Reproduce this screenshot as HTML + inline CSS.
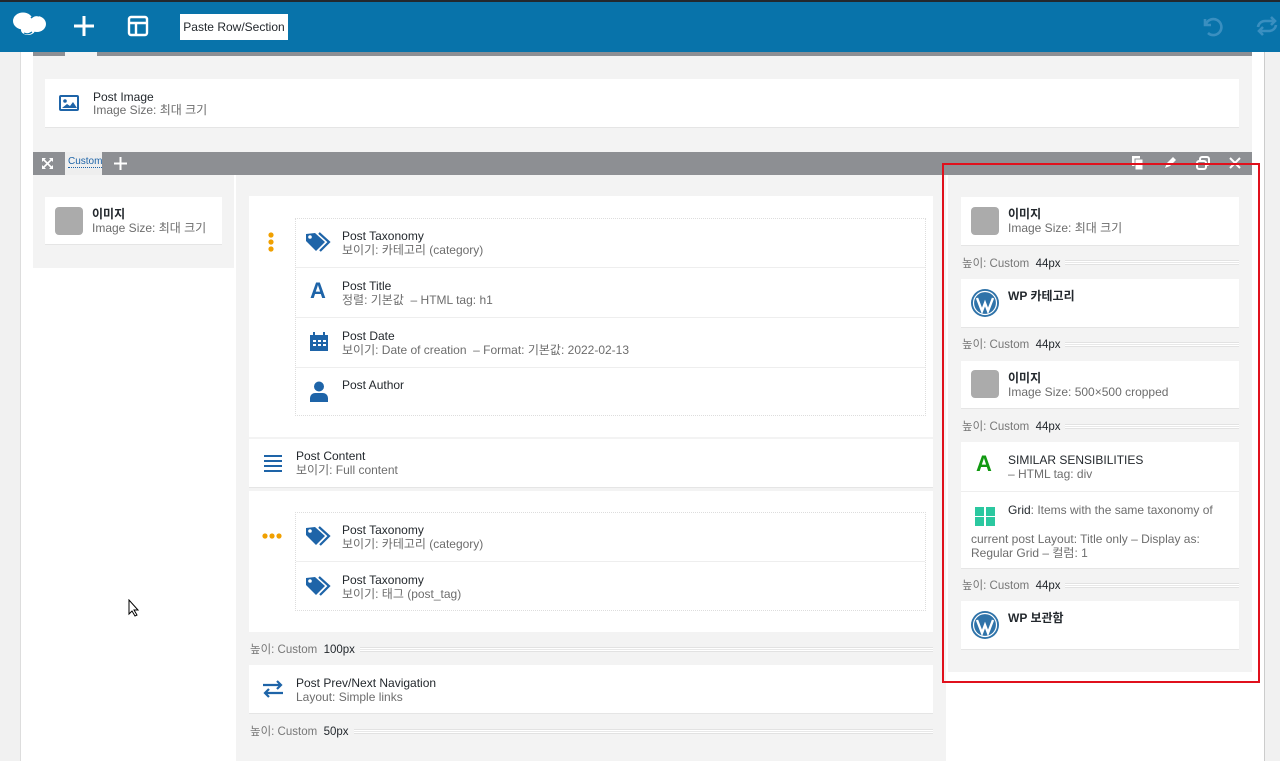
<!DOCTYPE html>
<html><head><meta charset="utf-8"><style>
*{box-sizing:border-box;margin:0;padding:0}
body{width:1280px;height:761px;overflow:hidden;position:relative;background:#f1f1f1;font-family:"Liberation Sans","Noto Sans CJK KR",sans-serif;font-size:12px;color:#23282d}
.a{position:absolute}
.card{position:absolute;background:#fff;border-bottom:1px solid #e5e5e5}
.t{position:absolute;font-size:12px;color:#23282d;line-height:14px;white-space:nowrap}
.s{color:#6d6d6d}
.sp{position:absolute;font-size:11.5px;color:#777;white-space:nowrap;line-height:14px}
.sp b{font-weight:normal;color:#23282d}
.ln{position:absolute;height:5px;border-top:1px solid #e2e2e2;border-bottom:1px solid #e2e2e2;background:repeating-linear-gradient(#fff 0 1px,#e8e8e8 1px 2px)}
.thumb{position:absolute;width:28px;height:28px;border-radius:4px;background:#ababab}
</style></head><body>
<div class="a" style="left:0;top:0;width:1280px;height:52px;background:#0873aa;border-top:2px solid #23282d"></div>
<svg class="a" style="left:12px;top:11px" width="36" height="26" viewBox="0 0 36 26"><ellipse cx="11" cy="10" rx="10" ry="8.5" fill="#fff"/><ellipse cx="25" cy="13" rx="9" ry="8" fill="#fff"/><ellipse cx="16" cy="19" rx="7" ry="5" fill="#fff"/><path d="M19 7 q4 -4 8 -2" stroke="#0873aa" stroke-width="1.5" fill="none"/><path d="M12 22 q4 2 8 -1" stroke="#0873aa" stroke-width="1.2" fill="none"/></svg>
<svg class="a" style="left:73px;top:15px" width="22" height="22"><path d="M11 1v20M1 11h20" stroke="#fff" stroke-width="3"/></svg>
<svg class="a" style="left:127px;top:15px" width="22" height="22"><rect x="2" y="2" width="18" height="18" rx="2" fill="none" stroke="#fff" stroke-width="2.4"/><path d="M2 8h18M9 8v12" stroke="#fff" stroke-width="2.4"/></svg>
<div class="a" style="left:180px;top:14px;width:108px;height:26px;background:#fff;font-size:12px;line-height:26px;text-align:center;color:#23282d">Paste Row/Section</div>
<svg class="a" style="left:1199px;top:15px" width="24" height="22"><path d="M6 4v6h6" stroke="#3a8fc0" stroke-width="2.6" fill="none"/><path d="M7 9a8 8 0 1 1 2 9" stroke="#3a8fc0" stroke-width="2.6" fill="none"/></svg>
<svg class="a" style="left:1254px;top:15px" width="26" height="22"><path d="M4 12a7 7 0 0 1 7-6h10M17 2l4 4-4 4M22 10a7 7 0 0 1-7 6H5M9 20l-4-4 4-4" stroke="#3a8fc0" stroke-width="2.6" fill="none"/></svg>

<div class="a" style="left:20px;top:52px;width:1245px;height:709px;background:#fff;border-left:1px solid #ddd;border-right:1px solid #ccc"></div>
<div class="a" style="left:33px;top:52px;width:1219px;height:4px;background:#8c8f94"></div>
<div class="a" style="left:65px;top:52px;width:32px;height:4px;background:#f3f3f3"></div>
<div class="a" style="left:33px;top:56px;width:1219px;height:96px;background:#f3f3f3"></div>
<div class="card" style="left:45px;top:79px;width:1194px;height:49px"></div>
<svg class="a" style="left:59px;top:95px" width="20" height="16"><rect width="20" height="16" rx="2" fill="#1e64a8"/><rect x="2" y="2" width="16" height="12" fill="#fff"/><circle cx="6" cy="6" r="1.8" fill="#1e64a8"/><path d="M3 13l5-4 3 2 3-4 4 6z" fill="#1e64a8"/></svg>
<div class="t" style="left:93px;top:90px">Post Image</div>
<div class="t s" style="left:93px;top:103px">Image Size: 최대 크기</div>

<div class="a" style="left:33px;top:152px;width:1219px;height:23px;background:#8d8f93"></div>
<svg class="a" style="left:41px;top:157px" width="13" height="13"><path d="M1 1l4 0-4 4zM12 1l0 4-4-4zM1 12l0-4 4 4zM12 12l-4 0 4-4z" fill="#fff"/><path d="M2 2l9 9M11 2l-9 9" stroke="#fff" stroke-width="1.6"/></svg>
<div class="a" style="left:65px;top:152px;width:37px;height:23px;background:#eee;font-size:10px;line-height:20px;color:#1e64a8;padding-left:3px"><span style="border-bottom:1px dotted #1e64a8">Custom</span></div>
<svg class="a" style="left:113px;top:156px" width="15" height="15"><path d="M7.5 1v13M1 7.5h13" stroke="#fff" stroke-width="2"/></svg>
<div class="a" style="left:1103px;top:163px;width:2px;height:2px;background:#fff"></div>
<svg class="a" style="left:1131px;top:156px" width="13" height="14"><rect x="1" y="0" width="8" height="10" fill="#fff"/><rect x="4" y="3" width="8" height="11" fill="#fff" stroke="#8d8f93"/></svg>
<svg class="a" style="left:1163px;top:156px" width="13" height="14"><path d="M2 12l2-5 6-6 3 3-6 6z" fill="#fff"/></svg>
<svg class="a" style="left:1196px;top:156px" width="14" height="14"><rect x="4" y="1" width="9" height="8" rx="2" fill="none" stroke="#fff" stroke-width="2"/><rect x="1" y="5" width="9" height="8" rx="2" fill="#8d8f93" stroke="#fff" stroke-width="2"/></svg>
<svg class="a" style="left:1229px;top:157px" width="12" height="12"><path d="M1 1l10 10M11 1L1 11" stroke="#fff" stroke-width="2"/></svg>

<div class="a" style="left:33px;top:175px;width:201px;height:93px;background:#f3f3f3"></div>
<div class="card" style="left:45px;top:197px;width:177px;height:48px"></div>
<div class="thumb" style="left:55px;top:207px"></div>
<div class="t" style="left:92px;top:207px;font-weight:bold">이미지</div>
<div class="t s" style="left:92px;top:221px">Image Size: 최대 크기</div>

<div class="a" style="left:236px;top:175px;width:710px;height:586px;background:#f3f3f3"></div>
<div class="a" style="left:249px;top:196px;width:684px;height:241px;background:#fff"></div>
<div class="a" style="left:295px;top:218px;width:631px;height:198px;border:1px dotted #ddd"></div>
<div class="a" style="left:296px;top:267px;width:629px;height:1px;background:#eee"></div>
<div class="a" style="left:296px;top:317px;width:629px;height:1px;background:#eee"></div>
<div class="a" style="left:296px;top:367px;width:629px;height:1px;background:#eee"></div>
<svg class="a" style="left:267px;top:232px" width="8" height="20"><circle cx="4" cy="3" r="2.6" fill="#f0a000"/><circle cx="4" cy="10" r="2.6" fill="#f0a000"/><circle cx="4" cy="17" r="2.6" fill="#f0a000"/></svg>
<svg class="a" style="left:305px;top:232px" width="26" height="20"><path d="M1 2v7l10 10 9-9L10 1z" fill="#1e64a8"/><circle cx="5" cy="5" r="1.8" fill="#fff"/><path d="M14 1l10 9-9 9" stroke="#1e64a8" stroke-width="2.2" fill="none"/></svg>
<div class="t" style="left:342px;top:229px">Post Taxonomy</div>
<div class="t s" style="left:342px;top:243px">보이기: 카테고리 (category)</div>
<div class="a" style="left:310px;top:279px;font:bold 22px 'Liberation Sans',sans-serif;color:#1e64a8;line-height:24px">A</div>
<div class="t" style="left:342px;top:279px">Post Title</div>
<div class="t s" style="left:342px;top:293px">정렬: 기본값 &nbsp;– HTML tag: h1</div>
<svg class="a" style="left:310px;top:332px" width="18" height="19"><rect x="0" y="3" width="18" height="16" fill="#1e64a8"/><rect x="3" y="0" width="2" height="4" fill="#1e64a8"/><rect x="13" y="0" width="2" height="4" fill="#1e64a8"/><g fill="#fff"><rect x="3" y="8" width="3" height="2"/><rect x="8" y="8" width="3" height="2"/><rect x="13" y="8" width="3" height="2"/><rect x="3" y="12" width="3" height="2"/><rect x="8" y="12" width="3" height="2"/><rect x="13" y="12" width="3" height="2"/></g></svg>
<div class="t" style="left:342px;top:329px">Post Date</div>
<div class="t s" style="left:342px;top:343px">보이기: Date of creation &nbsp;– Format: 기본값: 2022-02-13</div>
<svg class="a" style="left:310px;top:381px" width="18" height="21"><circle cx="9" cy="5.5" r="5" fill="#1e64a8"/><path d="M0 21v-4a5 5 0 0 1 5-5h8a5 5 0 0 1 5 5v4z" fill="#1e64a8"/></svg>
<div class="t" style="left:342px;top:378px">Post Author</div>

<div class="card" style="left:249px;top:439px;width:684px;height:49px"></div>
<svg class="a" style="left:264px;top:454px" width="18" height="18"><path d="M0 2h18M0 7h18M0 12h18M0 17h18" stroke="#1e64a8" stroke-width="2"/></svg>
<div class="t" style="left:296px;top:449px">Post Content</div>
<div class="t s" style="left:296px;top:463px">보이기: Full content</div>

<div class="a" style="left:249px;top:491px;width:684px;height:141px;background:#fff"></div>
<div class="a" style="left:295px;top:512px;width:631px;height:99px;border:1px dotted #ddd"></div>
<div class="a" style="left:296px;top:561px;width:629px;height:1px;background:#eee"></div>
<svg class="a" style="left:262px;top:532px" width="20" height="8"><circle cx="3" cy="4" r="2.6" fill="#f0a000"/><circle cx="10" cy="4" r="2.6" fill="#f0a000"/><circle cx="17" cy="4" r="2.6" fill="#f0a000"/></svg>
<svg class="a" style="left:305px;top:526px" width="26" height="20"><path d="M1 2v7l10 10 9-9L10 1z" fill="#1e64a8"/><circle cx="5" cy="5" r="1.8" fill="#fff"/><path d="M14 1l10 9-9 9" stroke="#1e64a8" stroke-width="2.2" fill="none"/></svg>
<div class="t" style="left:342px;top:523px">Post Taxonomy</div>
<div class="t s" style="left:342px;top:537px">보이기: 카테고리 (category)</div>
<svg class="a" style="left:305px;top:576px" width="26" height="20"><path d="M1 2v7l10 10 9-9L10 1z" fill="#1e64a8"/><circle cx="5" cy="5" r="1.8" fill="#fff"/><path d="M14 1l10 9-9 9" stroke="#1e64a8" stroke-width="2.2" fill="none"/></svg>
<div class="t" style="left:342px;top:573px">Post Taxonomy</div>
<div class="t s" style="left:342px;top:587px">보이기: 태그 (post_tag)</div>

<div class="sp" style="left:250px;top:643px">높이: Custom &nbsp;<b>100px</b></div>
<div class="ln" style="left:360px;top:647px;width:573px"></div>
<div class="card" style="left:249px;top:665px;width:684px;height:49px"></div>
<svg class="a" style="left:262px;top:680px" width="22" height="18"><path d="M1 5h18M15 1l4 4-4 4M21 13H3M7 9l-4 4 4 4" stroke="#1e64a8" stroke-width="2.2" fill="none"/></svg>
<div class="t" style="left:296px;top:676px">Post Prev/Next Navigation</div>
<div class="t s" style="left:296px;top:690px">Layout: Simple links</div>
<div class="sp" style="left:250px;top:725px">높이: Custom &nbsp;<b>50px</b></div>
<div class="ln" style="left:354px;top:729px;width:579px"></div>

<div class="a" style="left:948px;top:175px;width:304px;height:497px;background:#f3f3f3"></div>
<div class="card" style="left:961px;top:197px;width:278px;height:49px"></div>
<div class="thumb" style="left:971px;top:207px"></div>
<div class="t" style="left:1008px;top:207px;font-weight:bold">이미지</div>
<div class="t s" style="left:1008px;top:221px">Image Size: 최대 크기</div>
<div class="sp" style="left:962px;top:257px">높이: Custom &nbsp;<b>44px</b></div>
<div class="ln" style="left:1065px;top:260px;width:174px"></div>
<div class="card" style="left:961px;top:279px;width:278px;height:49px"></div>
<svg class="a" style="left:971px;top:289px" width="28" height="28"><circle cx="14" cy="14" r="14" fill="#2f73a9"/><circle cx="14" cy="14" r="11.5" fill="none" stroke="#fff" stroke-width="1.2"/><path d="M6 9l5 13 3-8 3 8 5-13" stroke="#fff" stroke-width="2.4" fill="none"/></svg>
<div class="t" style="left:1008px;top:289px;font-weight:bold">WP 카테고리</div>
<div class="sp" style="left:962px;top:338px">높이: Custom &nbsp;<b>44px</b></div>
<div class="ln" style="left:1065px;top:342px;width:174px"></div>
<div class="card" style="left:961px;top:361px;width:278px;height:48px"></div>
<div class="thumb" style="left:971px;top:370px"></div>
<div class="t" style="left:1008px;top:371px;font-weight:bold">이미지</div>
<div class="t s" style="left:1008px;top:385px">Image Size: 500×500 cropped</div>
<div class="sp" style="left:962px;top:420px">높이: Custom &nbsp;<b>44px</b></div>
<div class="ln" style="left:1065px;top:424px;width:174px"></div>
<div class="card" style="left:961px;top:442px;width:278px;height:127px"></div>
<div class="a" style="left:961px;top:491px;width:278px;height:1px;background:#eee"></div>
<div class="a" style="left:976px;top:452px;font:bold 22px 'Liberation Sans',sans-serif;color:#119911;line-height:24px">A</div>
<div class="t" style="left:1008px;top:453px">SIMILAR SENSIBILITIES</div>
<div class="t s" style="left:1008px;top:467px">– HTML tag: div</div>
<svg class="a" style="left:975px;top:507px" width="20" height="19"><g fill="#2bc8a0"><rect width="9" height="9"/><rect x="11" width="9" height="9"/><rect y="10" width="9" height="9"/><rect x="11" y="10" width="9" height="9"/></g></svg>
<div class="t" style="left:1008px;top:503px"><span>Grid</span><span class="s">: Items with the same taxonomy of</span></div>
<div class="t s" style="left:971px;top:532px">current post Layout: Title only – Display as:</div>
<div class="t s" style="left:971px;top:546px">Regular Grid – 컬럼: 1</div>
<div class="sp" style="left:962px;top:579px">높이: Custom &nbsp;<b>44px</b></div>
<div class="ln" style="left:1065px;top:583px;width:174px"></div>
<div class="card" style="left:961px;top:601px;width:278px;height:49px"></div>
<svg class="a" style="left:971px;top:611px" width="28" height="28"><circle cx="14" cy="14" r="14" fill="#2f73a9"/><circle cx="14" cy="14" r="11.5" fill="none" stroke="#fff" stroke-width="1.2"/><path d="M6 9l5 13 3-8 3 8 5-13" stroke="#fff" stroke-width="2.4" fill="none"/></svg>
<div class="t" style="left:1008px;top:611px;font-weight:bold">WP 보관함</div>

<div class="a" style="left:942px;top:163px;width:318px;height:520px;border:2px solid #e0101c"></div>
<svg class="a" style="left:128px;top:599px" width="12" height="18"><path d="M1 1v14l3-3 3 5 2-1-3-5h4z" fill="#fff" stroke="#000"/></svg>
</body></html>
